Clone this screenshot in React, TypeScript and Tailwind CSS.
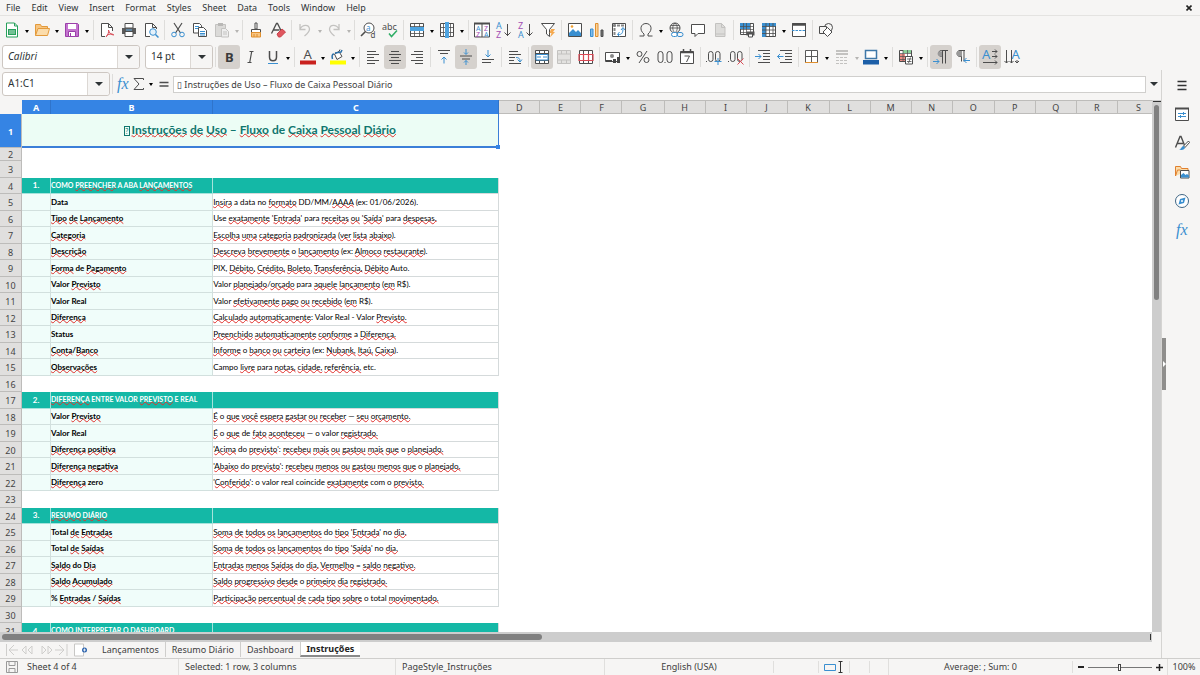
import type { ReactNode } from "react";

// ---------------- DATA ----------------
const MENUS = ["File", "Edit", "View", "Insert", "Format", "Styles", "Sheet", "Data", "Tools", "Window", "Help"];
const EXTRA_COLUMNS = ["D", "E", "F", "G", "H", "I", "J", "K", "L", "M", "N", "O", "P", "Q", "R", "S"];
const TABS = ["Lançamentos", "Resumo Diário", "Dashboard", "Instruções"];

type Row = { kind: "title" | "empty" | "section" | "item"; a?: string; b?: string; c?: string };

// words between ~ are flagged by the spell checker
const ROWS: Row[] = [
    { kind: "title", b: "~Instruções~ ~de~ ~Uso~ – ~Fluxo~ de ~Caixa~ ~Pessoal~ ~Diário~" },
    { kind: "empty" },
    { kind: "empty" },
    { kind: "section", a: "1.", b: "COMO ~PREENCHER~ A ABA ~LANÇAMENTOS~" },
    { kind: "item", b: "Data", c: "~Insira~ a data no ~formato~ DD/MM/~AAAA~ (ex: 01/06/2026)." },
    { kind: "item", b: "~Tipo~ ~de~ ~Lançamento~", c: "Use ~exatamente~ '~Entrada~' para ~receitas~ ~ou~ '~Saída~' para ~despesas.~" },
    { kind: "item", b: "~Categoria~", c: "~Escolha~ ~uma~ ~categoria~ ~padronizada~ (~ver~ ~lista~ ~abaixo~)." },
    { kind: "item", b: "~Descrição~", c: "~Descreva~ ~brevemente~ o ~lançamento~ (ex: ~Almoco~ ~restaurante~)." },
    { kind: "item", b: "~Forma~ de ~Pagamento~", c: "PIX, ~Débito,~ ~Crédito,~ ~Boleto,~ ~Transferência,~ ~Débito~ Auto." },
    { kind: "item", b: "Valor ~Previsto~", c: "Valor ~planejado~/~orçado~ para ~aquele~ ~lançamento~ (~em~ R$)." },
    { kind: "item", b: "Valor Real", c: "Valor ~efetivamente~ ~pago~ ~ou~ ~recebido~ (~em~ R$)." },
    { kind: "item", b: "~Diferença~", c: "~Calculado~ ~automaticamente~: Valor Real - Valor ~Previsto.~" },
    { kind: "item", b: "Status", c: "~Preenchido~ ~automaticamente~ ~conforme~ a ~Diferença.~" },
    { kind: "item", b: "~Conta~/~Banco~", c: "~Informe~ o ~banco~ ~ou~ ~carteira~ (ex: ~Nubank,~ ~Itaú,~ ~Caixa~)." },
    { kind: "item", b: "~Observações~", c: "Campo ~livre~ para ~notas,~ ~cidade,~ ~referência,~ etc." },
    { kind: "empty" },
    { kind: "section", a: "2.", b: "~DIFERENÇA~ ENTRE VALOR ~PREVISTO~ E REAL" },
    { kind: "item", b: "Valor ~Previsto~", c: "~É~ o ~que~ ~você~ ~espera~ ~gastar~ ~ou~ ~receber~ — ~seu~ ~orçamento.~" },
    { kind: "item", b: "Valor Real", c: "~É~ o ~que~ de ~fato~ ~aconteceu~ — o valor ~registrado.~" },
    { kind: "item", b: "~Diferença~ ~positiva~", c: "'~Acima~ do ~previsto~': ~recebeu~ ~mais~ ~ou~ ~gastou~ ~mais~ ~que~ o ~planejado.~" },
    { kind: "item", b: "~Diferença~ ~negativa~", c: "'~Abaixo~ do ~previsto~': ~recebeu~ ~menos~ ~ou~ ~gastou~ ~menos~ ~que~ o ~planejado.~" },
    { kind: "item", b: "~Diferença~ zero", c: "'~Conferido~': o valor real coincide ~exatamente~ com o ~previsto.~" },
    { kind: "empty" },
    { kind: "section", a: "3.", b: "~RESUMO~ ~DIÁRIO~" },
    { kind: "item", b: "Total ~de~ ~Entradas~", c: "~Soma~ ~de~ ~todos~ ~os~ ~lançamentos~ do ~tipo~ '~Entrada~' no ~dia.~" },
    { kind: "item", b: "Total ~de~ ~Saídas~", c: "~Soma~ ~de~ ~todos~ ~os~ ~lançamentos~ do ~tipo~ '~Saída~' no ~dia.~" },
    { kind: "item", b: "~Saldo~ do ~Dia~", c: "~Entradas~ ~menos~ ~Saídas~ do ~dia.~ ~Vermelho~ = ~saldo~ ~negativo.~" },
    { kind: "item", b: "~Saldo~ ~Acumulado~", c: "~Saldo~ ~progressivo~ ~desde~ o ~primeiro~ ~dia~ ~registrado.~" },
    { kind: "item", b: "% ~Entradas~ / ~Saídas~", c: "~Participação~ ~percentual~ ~de~ ~cada~ ~tipo~ ~sobre~ o total ~movimentado.~" },
    { kind: "empty" },
    { kind: "section", a: "4.", b: "COMO ~INTERPRETAR~ O DASHBOARD" },
];

// ---------------- ICONS ----------------
const DARK = "#4d4d4d";
const BLUE = "#3a8fd0";
const GREY = "#c3c2c0";

const alignLines = (x: number[], w: number[], color = DARK) =>
    w.map((width, i) => <path key={i} d={`M${x[i]} ${2.5 + i * 3}h${width}`} stroke={color} />);

const ICONS: Record<string, ReactNode> = {
    new: (
        <>
            <path d="M2.500 1h8l3 3v11h-11z" fill="#fff" stroke="#27a05b" />
            <path d="M10.500 1v3h3" stroke="#27a05b" />
            <path d="M4 7h8v6H4z" fill="#27a05b" />
            <path d="M5 9h6M5 11h6" stroke="#fff" strokeWidth=".7" />
        </>
    ),
    open: (
        <>
            <path d="M1.500 13.500V2.500h5l1 2h6v2" fill="#f7c581" stroke="#e39a3b" />
            <path d="M1.500 13.500l2.500-7h11.500l-2 7z" fill="#fbdcab" stroke="#e39a3b" />
        </>
    ),
    save: (
        <>
            <path d="M1.500 1.500h12l1 1v12h-13z" fill="#c474cf" stroke="#9b3fa9" />
            <path d="M4 2h8v5H4z" fill="#fff" />
            <path d="M4.500 9.500h7v5h-7z" fill="#fff" stroke="#9b3fa9" />
            <path d="M6.500 11v3" stroke="#9b3fa9" />
        </>
    ),
    pdf: (
        <>
            <path d="M6 14.500H2.500v-13h7l4 4V9M9.500 1.500v4h4" fill="#fff" stroke={DARK} />
            <path d="M7 15c2-2 3-5 2.500-7M9.500 8c.5 3 3 5 5.500 5M7.500 13.500c2-1.500 5-2 7-1" stroke="#d84a55" />
        </>
    ),
    print: (
        <>
            <path d="M4 1.500h8V6H4z" fill="#fff" stroke={DARK} />
            <path d="M1 6h14v6H1z" fill="#5a5a5a" />
            <path d="M4 9.500h8v5H4z" fill="#fff" stroke={DARK} />
            <path d="M5 8h6" stroke="#6bb3e8" />
        </>
    ),
    preview: (
        <>
            <path d="M7 14.500H2.500v-13h7l4 4V7M9.500 1.500v4h4" fill="#fff" stroke={DARK} />
            <circle cx="10" cy="10" r="3.300" fill="#e4f1fb" stroke={BLUE} />
            <path d="M12.500 12.500L15.500 15.500" stroke={BLUE} strokeWidth="1.500" />
        </>
    ),
    cut: (
        <>
            <path d="M4 1l6.500 10M12 1L5.500 11" stroke={DARK} strokeWidth="1.200" />
            <circle cx="4" cy="12.500" r="2.300" stroke={BLUE} />
            <circle cx="12" cy="12.500" r="2.300" stroke={BLUE} />
        </>
    ),
    copy: (
        <>
            <path d="M1.500 1.500h6l2 2v7.500h-8z" fill="#fff" stroke={DARK} />
            <path d="M3 4.500h4M3 6.500h3" stroke={BLUE} />
            <path d="M6.500 5.500h5l3 3v6h-8z" fill="#fff" stroke={DARK} />
            <path d="M8 9.500h5M8 11.500h5M8 13h5" stroke={BLUE} />
        </>
    ),
    paste: (
        <>
            <path d="M1.500 2.500h10v12h-10z" fill="#dbdad8" stroke={GREY} />
            <path d="M4 1h5v3H4z" fill="#b9b8b6" />
            <path d="M7.500 6.500h4l3 3v5.500h-7z" fill="#eee" stroke={GREY} />
            <path d="M9 10h4M9 12h4" stroke={GREY} />
        </>
    ),
    clone: (
        <>
            <path d="M7 1h2v6H7zM3.500 7.500h9v3h-9z" fill="#fff" stroke={DARK} />
            <path d="M3.500 10.500h9v4.500h-9z" fill="#f8c583" stroke="#e0902f" />
            <path d="M6 12v3M9 12v3" stroke="#e0902f" />
        </>
    ),
    clear: (
        <>
            <path d="M1.500 11.500L6.500 1.500h1l4 8M3.500 8h6" stroke={DARK} strokeWidth="1.300" />
            <path d="M7 12l5-5 3.500 3-5 5h-2z" fill="#e0575f" stroke="#c9404a" />
        </>
    ),
    undo: <path d="M3 2v5.500h5.500M3 7C6 2 12 2.500 12.500 7c0 3-2.500 5-5 7" stroke={GREY} strokeWidth="1.300" />,
    redo: <path d="M13 2v5.500H7.500M13 7C10 2 4 2.500 3.500 7c0 3 2.500 5 5 7" stroke={GREY} strokeWidth="1.300" />,
    find: (
        <>
            <circle cx="9" cy="6" r="5" fill="#fff" stroke={DARK} />
            <path d="M5.500 9.500L1 14" stroke={DARK} strokeWidth="1.600" />
            <text x="6" y="8.500" fontSize="8" fill={BLUE}>a</text>
            <text x="10.500" y="15.500" fontSize="8" fill={DARK}>d</text>
        </>
    ),
    spell: (
        <>
            <text x="0" y="7.500" fontSize="9" fill={DARK}>abc</text>
            <path d="M7 11.500l2.500 3L15 8.500" stroke="#2fae66" strokeWidth="1.500" />
        </>
    ),
    row: (
        <>
            <path d="M1.500 1.500h13v13h-13z" fill="#fff" stroke={DARK} />
            <path d="M1 4.500h14M1 11.500h14M5.500 1v14M10.500 1v14" stroke={DARK} strokeWidth=".8" />
            <path d="M1 5h14v4H1z" fill="#4da3e0" />
        </>
    ),
    column: (
        <>
            <path d="M1.500 1.500h13v13h-13z" fill="#fff" stroke={DARK} />
            <path d="M1 5.500h14M1 10.500h14M4.500 1v14M11.500 1v14" stroke={DARK} strokeWidth=".8" />
            <path d="M6 0h4v16H6z" fill="#4da3e0" />
        </>
    ),
    sort: (
        <>
            <path d="M.500 1.500h15v13.500H.500zM8 1v14" fill="#fff" stroke={DARK} />
            <path d="M0 1.500h16" stroke={DARK} strokeWidth="2" />
            <g fontSize="7">
                <text x="2" y="8.500" fill={BLUE}>A</text>
                <text x="2" y="14.500" fill="#a34db3">Z</text>
                <text x="10" y="8.500" fill="#a34db3">Z</text>
                <text x="10" y="14.500" fill={BLUE}>A</text>
            </g>
        </>
    ),
    az: (
        <>
            <text x="0" y="7" fontSize="9" fill={BLUE}>A</text>
            <text x="0" y="15.500" fontSize="9" fill="#a34db3">Z</text>
            <path d="M11.500 2v12M8.500 10.500l3 3 3-3" stroke={DARK} />
        </>
    ),
    za: (
        <>
            <text x="0" y="7" fontSize="9" fill="#a34db3">Z</text>
            <text x="0" y="15.500" fontSize="9" fill={BLUE}>A</text>
            <path d="M11.500 2v12M8.500 10.500l3 3 3-3" stroke={DARK} />
        </>
    ),
    filter: (
        <>
            <path d="M1.500 1.500h13l-5 6v7l-3-2.500V7.500z" fill="#fff" stroke={DARK} />
            <path d="M11 7h4l-2 3h2l-5 5.500 1.500-4.500H9.500z" fill="#f5a94f" />
        </>
    ),
    image: (
        <>
            <path d="M1.500 1.500h13v13h-13z" fill="#fff" stroke={DARK} />
            <path d="M2 14v-3l4-4 3 3 2-2 3 3v3z" fill={BLUE} />
            <circle cx="5" cy="4.500" r="1.300" fill="#f0a030" />
        </>
    ),
    chart: (
        <>
            <path d="M1.500 7h2.500v7.500H1.500z" fill="#7fbcec" stroke={BLUE} />
            <path d="M6.500 1.500H9v13H6.500z" fill="#fbd39b" stroke="#e0902f" />
            <path d="M12 8h2v6.500h-2z" fill="#777" stroke={DARK} />
        </>
    ),
    pivot: (
        <>
            <path d="M1.500 1.500h13v13h-13z" fill="#fff" stroke={DARK} />
            <path d="M2 3.500h12M3.500 2v12" stroke="#888" strokeWidth="2" strokeDasharray="3 1" />
            <path d="M7 12.500c4 .500 5-2 5-6M10 8l2-2.500 2 2.500M8.500 10l-2 2.500 2 2" stroke={BLUE} />
        </>
    ),
    omega: <path d="M1.500 14H6v-2C1 8 2.500 1.500 8 1.500s7 6.500 2 10.500v2h4.500" stroke={DARK} />,
    link: (
        <>
            <circle cx="7" cy="6" r="5" stroke={DARK} />
            <path d="M2 6h10M7 1c-3 3-3 7 0 10M7 1c3 3 3 7 0 10M3 3.500h8" stroke={DARK} strokeWidth=".8" />
            <rect x="3.500" y="10.500" width="6" height="4" rx="2" fill="#fff" stroke={BLUE} />
            <rect x="9" y="10.500" width="6" height="4" rx="2" stroke={BLUE} />
        </>
    ),
    comment: <path d="M1.500 2.500h13v9H8l-3 3v-3H1.500z" fill="#fff" stroke={DARK} />,
    headers: (
        <>
            <path d="M3.500 1.500h6l3.500 3.500v9.500H3.500z" fill="#dddcda" stroke={GREY} />
            <path d="M4 12h9M9.500 1.500v4H13" stroke={GREY} />
        </>
    ),
    printArea: (
        <>
            <path d="M1.500 1.500h13v11h-13z" fill="#fff" stroke={DARK} />
            <path d="M1 1h10v6H1z" fill={BLUE} />
            <path d="M1 4.500h13M1 7.500h13M1 10.500h13M4.500 1v12M7.500 1v12M11.500 1v12" stroke={DARK} strokeWidth=".7" />
            <path d="M7.500 9.500h8v4h-8z" fill="#555" />
            <path d="M9.500 12h4v3h-4z" fill="#fff" stroke={DARK} />
        </>
    ),
    freeze: (
        <>
            <path d="M1.500 1.500h13v13h-13z" fill="#fff" stroke={DARK} />
            <path d="M1 1h14v3.500H5V15H1z" fill={BLUE} />
            <path d="M1 4.500h14M1 8h14M1 11.500h14M5 1v14M8.500 1v14M12 1v14" stroke={DARK} strokeWidth=".8" />
        </>
    ),
    split: (
        <>
            <path d="M1.500 1.500h13v13h-13z" fill="#fff" stroke={DARK} />
            <path d="M1 2.500h14" stroke={DARK} strokeWidth="2.500" />
            <path d="M1 8.500h14" stroke={BLUE} strokeDasharray="2.500 1" />
        </>
    ),
    shapes: (
        <>
            <circle cx="10.500" cy="5.500" r="4" stroke={DARK} />
            <path d="M1.500 4.500h7v7h-7z" fill="#f6f5f4" stroke={DARK} />
            <path d="M9.500 5.500l4.500 4.500-4.500 4.500L5 10z" fill="#fff" stroke={DARK} />
        </>
    ),
    bold: <text x="4" y="12.500" fontSize="13" fontWeight="700" fill="#3a3a3a">B</text>,
    italic: <path d="M6.500 2.500h4M4.500 13.500h4M8.700 2.500l-2 11" stroke={DARK} strokeWidth="1.200" />,
    underline: (
        <>
            <path d="M4.500 2v6c0 5 7 5 7 0V2" stroke={DARK} strokeWidth="1.500" />
            <path d="M3 14.500h10" stroke={BLUE} />
        </>
    ),
    fontColor: (
        <>
            <text x="3.500" y="10" fontSize="13" fill={DARK}>A</text>
            <path d="M0 11.500h16v4H0z" fill="#c9211e" />
        </>
    ),
    highlight: (
        <>
            <path d="M4.500 5L9 2.500l3 5-5 3zM9 2.500l1-2" fill="#fff" stroke={DARK} />
            <path d="M4 5C1.500 5 2 8 2.500 10M5 4l6-1 1-2" stroke="#2a6fa8" strokeWidth="1.500" />
            <path d="M0 11.500h16v4H0z" fill="#ffff00" />
        </>
    ),
    left: alignLines([2, 2, 2, 2, 2], [9, 12, 7, 12, 8]),
    center: alignLines([4, 2, 4, 2, 4], [8, 12, 8, 12, 8]),
    right: alignLines([5, 2, 7, 2, 6], [9, 12, 7, 12, 8]),
    top: (
        <>
            <path d="M2 1.500h12M4 4.500h8" stroke={DARK} />
            <path d="M8 14.500V8M5.500 10.500L8 8l2.500 2.500" stroke={BLUE} />
        </>
    ),
    middle: (
        <>
            <path d="M2 7h12M4 10h8" stroke={DARK} />
            <path d="M8 0v5M6 3.500l2 2 2-2M8 16v-4.500M6 13.500l2-2 2 2" stroke={BLUE} />
        </>
    ),
    bottom: (
        <>
            <path d="M2 10.500h12M2 13.500h9" stroke={DARK} />
            <path d="M8 1v6.500M5.500 5.500L8 8l2.500-2.500" stroke={BLUE} />
        </>
    ),
    wrap: (
        <>
            <path d="M2 2.500h9M2 5.500h12M2 8.500h6M2 11.500h5M2 14.500h12" stroke={DARK} />
            <path d="M9 8.500c3 0 4 1 4 4M10.500 10.500l2.500 2.500 2-2.500" stroke={BLUE} />
        </>
    ),
    merge: (
        <>
            <path d="M1.500 1.500h13v13h-13zM1 4.500h14M1 11.500h14M5.500 1v4M10.500 1v4M5.500 12v3M10.500 12v3" fill="#fff" stroke={DARK} />
            <path d="M2 5.500h12v5.500H2z" fill="#fff" stroke={BLUE} />
            <path d="M3 8h4M9 8h4" stroke={BLUE} />
        </>
    ),
    mergeOff: (
        <>
            <path d="M1.500 1.500h13v13h-13z" fill="#e3e2e0" stroke={GREY} />
            <path d="M1 5h14M1 11h14M5.500 1v4M10.500 1v4M5.500 11v4M10.500 11v4" stroke={GREY} />
        </>
    ),
    unmerge: (
        <>
            <path d="M1.500 1.500h13v13h-13zM5.500 1v14M10.500 1v14" fill="#fff" stroke={DARK} />
            <path d="M1 5.500h14v6H1zM5.500 5v7M10.500 5v7" stroke="#d84a55" strokeWidth="1.200" />
        </>
    ),
    currency: (
        <>
            <path d="M.500 3.500h14v9H.500z" fill="#fff" stroke={DARK} />
            <circle cx="7" cy="7" r="2" fill="#888" />
            <path d="M1 11h6v2H1zM8 10h3v4H8zM12 8h3v6h-3z" fill="#444" />
        </>
    ),
    percent: (
        <>
            <circle cx="4.500" cy="5" r="2.500" stroke={DARK} />
            <circle cx="11.500" cy="11" r="2.500" stroke={DARK} />
            <path d="M12 2L4 14" stroke={DARK} />
        </>
    ),
    number: (
        <>
            <rect x="1" y="2.500" width="5" height="11" rx="2.500" stroke={DARK} />
            <rect x="10" y="2.500" width="5" height="11" rx="2.500" stroke={DARK} />
            <path d="M7.500 13.500h1" stroke={DARK} />
        </>
    ),
    date: (
        <>
            <path d="M1.500 2.500h13v12h-13z" fill="#fff" stroke={DARK} />
            <path d="M1 3.500h14M4.500 0v4M11.500 0v4" stroke={DARK} strokeWidth="1.500" />
            <path d="M5.500 7h5l-3 6" stroke={DARK} />
        </>
    ),
    decimalAdd: (
        <>
            <path d="M0 12.500h1" stroke={DARK} />
            <rect x="2.500" y="2.500" width="4.500" height="10" rx="2.200" stroke={DARK} />
            <rect x="9.500" y="2.500" width="4.500" height="10" rx="2.200" stroke={DARK} />
            <path d="M12 9v7M8.500 12.500h7" stroke={BLUE} />
        </>
    ),
    decimalDel: (
        <>
            <path d="M0 12.500h1" stroke={DARK} />
            <rect x="2.500" y="2.500" width="4.500" height="10" rx="2.200" stroke={DARK} />
            <rect x="9.500" y="2.500" width="4.500" height="10" rx="2.200" stroke={DARK} />
            <path d="M9.500 9.500l6 6M15.500 9.500l-6 6" stroke="#d84a55" />
        </>
    ),
    indent: (
        <>
            <path d="M3 1.500h12M8 4.500h7M8 7.500h7M8 10.500h7M3 13.500h12" stroke={DARK} />
            <path d="M0 7.500h6M3.500 5L6 7.500 3.500 10" stroke={BLUE} />
        </>
    ),
    outdent: (
        <>
            <path d="M3 1.500h12M8 4.500h7M8 7.500h7M8 10.500h7M3 13.500h12" stroke={DARK} />
            <path d="M.500 7.500h6M3 5L.500 7.500 3 10" stroke={BLUE} />
        </>
    ),
    borders: (
        <>
            <path d="M1.500 1.500h12v12h-12zM7.500 1v12M1 7.500h12" fill="#fff" stroke="#5a5a5a" />
            <path d="M1 13.500h13" stroke="#e0902f" />
        </>
    ),
    lineStyle: (
        <>
            <path d="M2 2h12M2 5h12" stroke={GREY} strokeWidth="2" />
            <path d="M2 8.500h12M2 11.500h12M2 14.500h12" stroke={GREY} strokeDasharray="3 1" />
        </>
    ),
    borderColor: (
        <>
            <path d="M2.500 1.500h11v8h-11z" fill="#fff" stroke="#3f78a8" strokeWidth="1.500" />
            <path d="M0 11h16v4.500H0z" fill="#1d5fa8" />
        </>
    ),
    conditional: (
        <>
            <path d="M1.500 1.500h12v11h-12z" fill="#fff" stroke={DARK} />
            <path d="M5 1h8v3H5z" fill="#8ad19a" />
            <path d="M2 5h5v7H2z" fill="#ee8d84" />
            <path d="M1 4.500h13M1 7.500h13M1 10.500h13M5 1v12M9.500 1v12" stroke={DARK} strokeWidth=".7" />
            <path d="M7.500 7.500h7v7.500h-7z" fill="#fff" stroke={DARK} />
            <path d="M9 10h4.500M9 12.500h4.500M12.500 8.500l-2 5.500" stroke={DARK} strokeWidth=".8" />
        </>
    ),
    ltr: (
        <>
            <path d="M15 1.500H8.500c-4 0-4 6 0 6H9M9.500 1.500v13M12.500 1.500v13" stroke={DARK} />
            <path d="M6 2.500h3v5H7c-3-1-3-4-1-5z" fill="#999" />
            <path d="M0 12.500h6M3.500 10L6 12.500 3.500 15" stroke={BLUE} />
        </>
    ),
    rtl: (
        <>
            <path d="M10 1.500H5c-4 0-4 6 0 6h1M6.500 1.500v11M9 1.500v11" stroke={DARK} />
            <path d="M4 2h3v5.500H4c-3-1-3-4.500 0-5.500z" fill="#999" />
            <path d="M9 11.500h6M11.500 9L9 11.500 11.500 14" stroke={BLUE} />
        </>
    ),
    horizontalText: (
        <>
            <text x="0" y="10" fontSize="13" fill={BLUE}>A</text>
            <path d="M10 2.500h5M10 7.500h5M1 13.500h14M13 .500l2 2-2 2M13 5.500l2 2-2 2M13 11.500l2 2-2 2" stroke={DARK} />
        </>
    ),
    verticalText: (
        <>
            <text x="7.500" y="10" fontSize="13" fill={BLUE}>A</text>
            <path d="M2.500 1v13M7.500 1v13M13 11v3M.500 12l2 2 2-2M5.500 12l2 2 2-2M11 12l2 2 2-2" stroke={DARK} />
        </>
    ),
    menu: <path d="M3.500 4.500h9M3.500 8.500h9M3.500 12.500h9" stroke="#333" strokeWidth="1.300" />,
    properties: (
        <>
            <path d="M1.500 2.500h13v12h-13z" fill="#fff" stroke={DARK} />
            <path d="M1 2.500h14" stroke={DARK} strokeWidth="2" />
            <path d="M4 7.500h8M4 10.500h8M9.500 6v3M6.500 9v3" stroke={BLUE} />
        </>
    ),
    styles: (
        <>
            <path d="M1.500 12.500L6 1.500h1l4 10M3 8.500h6" stroke={DARK} strokeWidth="1.400" />
            <path d="M14.500 6l-5 5 1.500 1.500 4.500-5z" fill="#fff" stroke={DARK} />
            <path d="M5 14.500c3-.500 2-3 4.500-3.500l1.500 1.500c0 2-3 3-6 2z" fill={BLUE} />
        </>
    ),
    gallery: (
        <>
            <path d="M1.500 12V2.500h5l1 2h6.500v2M1.500 12l2-6h3" fill="#fbdcab" stroke="#e0802f" />
            <path d="M6.500 6.500h8.500v7.500H6.500z" fill="#fff" stroke={DARK} />
            <path d="M7 13.500V11l2.500-2 2 2 1.500-1 2 1.500v2z" fill={BLUE} />
        </>
    ),
    navigator: (
        <>
            <circle cx="8" cy="8" r="6.500" fill="#fff" stroke="#3f6685" />
            <path d="M11.500 4.500L10 10l-5.500 1.500L6 6z" fill={BLUE} />
            <circle cx="8" cy="8" r="1" fill="#fff" />
        </>
    ),
    functions: (
        <text x="2" y="13" fontSize="16" fontStyle="italic" fontFamily="Liberation Serif, serif" fill={BLUE}>
            fx
        </text>
    ),
    sigma: <path d="M12.500 4V2.500H3l5 5.500-5 5.500h9.500V12" stroke={DARK} />,
    equals: <path d="M3.500 6.500h9M3.500 10h9" stroke={DARK} strokeWidth="1.500" />,
};

function Icon({ name }: { name: string }) {
    return (
        <svg
            viewBox="0 0 16 16"
            className="size-4 shrink-0 overflow-visible"
            fill="none"
            fontFamily="Noto Sans, sans-serif"
            aria-hidden="true"
        >
            {ICONS[name]}
        </svg>
    );
}

function Caret({ className = "text-[#2e3436]" }: { className?: string }) {
    return (
        <svg viewBox="0 0 8 4" className={`h-1 w-2 shrink-0 ${className}`} aria-hidden="true">
            <path d="M0 0h8L4 4z" fill="currentColor" />
        </svg>
    );
}

// ---------------- TOOLBARS ----------------
type Tool = { icon: string; label: string; menu?: boolean; off?: boolean; active?: boolean };

const STANDARD: Tool[][] = [
    [
        { icon: "new", label: "New", menu: true },
        { icon: "open", label: "Open", menu: true },
        { icon: "save", label: "Save", menu: true },
    ],
    [{ icon: "pdf", label: "Export as PDF" }, { icon: "print", label: "Print" }, { icon: "preview", label: "Print Preview" }],
    [{ icon: "cut", label: "Cut" }, { icon: "copy", label: "Copy" }, { icon: "paste", label: "Paste", menu: true, off: true }],
    [{ icon: "clone", label: "Clone Formatting" }, { icon: "clear", label: "Clear Formatting" }],
    [{ icon: "undo", label: "Undo", menu: true, off: true }, { icon: "redo", label: "Redo", menu: true, off: true }],
    [{ icon: "find", label: "Find & Replace" }, { icon: "spell", label: "Spelling" }],
    [{ icon: "row", label: "Row", menu: true }, { icon: "column", label: "Column", menu: true }],
    [
        { icon: "sort", label: "Sort" },
        { icon: "az", label: "Sort Ascending" },
        { icon: "za", label: "Sort Descending" },
        { icon: "filter", label: "AutoFilter" },
    ],
    [{ icon: "image", label: "Image" }, { icon: "chart", label: "Chart" }, { icon: "pivot", label: "Pivot Table" }],
    [
        { icon: "omega", label: "Special Character", menu: true },
        { icon: "link", label: "Hyperlink" },
        { icon: "comment", label: "Comment" },
        { icon: "headers", label: "Headers and Footers", off: true },
    ],
    [
        { icon: "printArea", label: "Define Print Area" },
        { icon: "freeze", label: "Freeze", menu: true },
        { icon: "split", label: "Split Window" },
    ],
    [{ icon: "shapes", label: "Show Draw Functions" }],
];

const FORMATTING: Tool[][] = [
    [
        { icon: "bold", label: "Bold", active: true },
        { icon: "italic", label: "Italic" },
        { icon: "underline", label: "Underline", menu: true },
    ],
    [{ icon: "fontColor", label: "Font Color", menu: true }, { icon: "highlight", label: "Background Color", menu: true }],
    [
        { icon: "left", label: "Align Left" },
        { icon: "center", label: "Center Horizontally", active: true },
        { icon: "right", label: "Align Right" },
    ],
    [
        { icon: "top", label: "Align Top" },
        { icon: "middle", label: "Center Vertically", active: true },
        { icon: "bottom", label: "Align Bottom" },
    ],
    [{ icon: "wrap", label: "Wrap Text" }],
    [
        { icon: "merge", label: "Merge and Center", active: true },
        { icon: "mergeOff", label: "Merge Cells", off: true },
        { icon: "unmerge", label: "Unmerge Cells" },
    ],
    [
        { icon: "currency", label: "Currency", menu: true },
        { icon: "percent", label: "Percent" },
        { icon: "number", label: "Number" },
        { icon: "date", label: "Date" },
    ],
    [{ icon: "decimalAdd", label: "Add Decimal" }, { icon: "decimalDel", label: "Delete Decimal" }],
    [{ icon: "indent", label: "Increase Indent" }, { icon: "outdent", label: "Decrease Indent" }],
    [
        { icon: "borders", label: "Borders", menu: true },
        { icon: "lineStyle", label: "Border Style", menu: true, off: true },
        { icon: "borderColor", label: "Border Color", menu: true },
    ],
    [{ icon: "conditional", label: "Conditional Formatting", menu: true }],
    [{ icon: "ltr", label: "Left-To-Right", active: true }, { icon: "rtl", label: "Right-To-Left" }],
    [{ icon: "horizontalText", label: "Text left to right", active: true }, { icon: "verticalText", label: "Text top to bottom" }],
];

function ToolGroup({ tools, last }: { tools: Tool[]; last: boolean }) {
    return (
        <>
            {tools.map((tool) => (
                <div key={tool.icon} className="flex shrink-0 items-center">
                    <button
                        type="button"
                        aria-label={tool.label}
                        className={`flex h-6 w-[22px] items-center justify-center rounded-[3px] ${tool.active ? "bg-[#d5d1cd]" : ""}`}
                    >
                        <Icon name={tool.icon} />
                    </button>
                    {tool.menu && (
                        <button
                            type="button"
                            aria-label={`${tool.label} options`}
                            className={`flex h-6 items-center justify-center pt-0.5 ${tool.off ? "w-[7px] text-[#b5b4b2]" : "w-2 text-black"}`}
                        >
                            <svg viewBox="0 0 4 3" className="h-[3px] w-1" aria-hidden="true">
                                <path d="M0 0h4L2 3z" fill="currentColor" />
                            </svg>
                        </button>
                    )}
                </div>
            ))}
            {!last && <div className="mx-0.5 h-5 w-px shrink-0 bg-[#dedddb]" />}
        </>
    );
}

function Combo({ label, value, width, italic = false }: { label: string; value: string; width: string; italic?: boolean }) {
    return (
        <div className={`relative h-6 shrink-0 ${width}`}>
            <select
                aria-label={label}
                className={`block size-full appearance-none rounded-[3px] border border-[#cdc7c2] bg-white pb-0.5 pl-[5px] text-[10px] leading-4 text-[#2e3436] ${italic ? "italic" : ""}`}
            >
                <option>{value}</option>
            </select>
            <div className="pointer-events-none absolute inset-y-px right-px flex w-[22px] items-center justify-center rounded-r-[3px] border-l border-[#dcd8d4] bg-[#f6f5f4]">
                <Caret />
            </div>
        </div>
    );
}

// ---------------- SHEET ----------------
function CheckedText({ text }: { text: string }) {
    return (
        <>
            {text.split("~").map((part, i) =>
                i % 2 === 1 ? (
                    <span
                        key={i}
                        className="underline decoration-[#e0302c] decoration-wavy decoration-1 -underline-offset-1 [text-decoration-skip-ink:none]"
                    >
                        {part}
                    </span>
                ) : (
                    part
                ),
            )}
        </>
    );
}

function SheetRow({ row, index }: { row: Row; index: number }) {
    const isTitle = row.kind === "title";
    const height = isTitle ? "h-[34px]" : index === 1 ? "h-[13px]" : index % 2 === 1 ? "h-4" : "h-[17px]";
    const section = row.kind === "section";

    return (
        <tr className={height}>
            <th
                scope="row"
                className={`border-r border-b border-[#bdbcba] p-0 pt-px text-center font-['Noto_Sans',sans-serif] text-[9px] leading-none ${isTitle ? "bg-[#3584e4] font-bold text-white" : "bg-[#e0dfde] font-normal text-[#444]"}`}
            >
                {index + 1}
            </th>
            {row.kind === "title" && (
                <td colSpan={3} className="relative border-r border-b-2 border-[#3b7fd8] bg-[#ecfdf5] p-0 text-center text-[12px] leading-none font-bold text-[#0f766e]">
                    <span className="mr-0.5 inline-block border border-current text-[7px] leading-[8px] font-normal">?</span>
                    <CheckedText text={row.b ?? ""} />
                    <span className="absolute -right-0.5 -bottom-[3px] size-1 bg-[#3584e4]" />
                </td>
            )}
            {row.kind === "empty" && <td colSpan={3} className="p-0" />}
            {(section || row.kind === "item") && (
                <>
                    <td className={`border-r border-b p-0 pb-px text-center text-[8px] leading-none font-bold ${section ? "border-[#a5e3db] bg-[#14b8a6] text-white" : "border-[#d2e0de] bg-[#f0fdfa]"}`}>
                        {row.a}
                    </td>
                    <td className={`border-r border-b p-0 pb-px leading-none font-bold whitespace-nowrap ${section ? "border-[#a5e3db] bg-[#14b8a6] text-[7px] text-white" : "border-[#d2e0de] bg-[#f0fdfa] text-[8px] text-black"}`}>
                        <CheckedText text={row.b ?? ""} />
                    </td>
                    <td className={`border-r border-b border-[#d5dadb] p-0 pb-px text-[8px] leading-none whitespace-nowrap ${section ? "bg-[#14b8a6]" : "bg-white text-black"}`}>
                        <CheckedText text={row.c ?? ""} />
                    </td>
                </>
            )}
            <td colSpan={EXTRA_COLUMNS.length} className="p-0" />
        </tr>
    );
}

function Sheet() {
    return (
        <div className="min-h-0 min-w-0 flex-1 overflow-hidden bg-white">
            <table className="w-[1160px] table-fixed border-separate border-spacing-0">
                <colgroup>
                    <col className="w-[22px]" />
                    <col className="w-[29px]" />
                    <col className="w-[162px]" />
                    <col className="w-[286px]" />
                    {EXTRA_COLUMNS.map((name, i) => (
                        <col key={name} className={i % 4 === 3 ? "w-[42px]" : "w-[41px]"} />
                    ))}
                </colgroup>
                <thead>
                    <tr className="h-3.5 text-[9px] leading-none">
                        <td className="bg-[#f6f5f4] p-0" />
                        {["A", "B", "C"].map((name) => (
                            <th key={name} scope="col" className="border-r border-[#2f74cb] bg-[#3584e4] p-0 font-bold text-white">
                                {name}
                            </th>
                        ))}
                        {EXTRA_COLUMNS.map((name) => (
                            <th key={name} scope="col" className="border-y border-r border-[#bdbcba] bg-[#e0dfde] p-0 font-normal text-[#444]">
                                {name}
                            </th>
                        ))}
                    </tr>
                </thead>
                <tbody className="font-[Lato,sans-serif]">
                    {ROWS.map((row, i) => (
                        <SheetRow key={i} row={row} index={i} />
                    ))}
                </tbody>
            </table>
        </div>
    );
}

function SheetTabs() {
    return (
        <div className="flex h-4 shrink-0 items-stretch pb-px text-[9px] text-[#3d3d3d]">
            <div className="flex w-[74px] items-center pl-1.5">
                <svg viewBox="0 0 62 12" className="h-3 w-[62px]" fill="none" stroke="#cfcecc" aria-hidden="true">
                    <path d="M.500 0v12M8 1L3 6l5 5M3 6h9M20 2l-4 4 4 4zM26 2l-4 4 4 4zM36 2l4 4-4 4zM42 2l4 4-4 4zM53 1l5 5-5 5M58 6h-9M61 0v12" />
                </svg>
            </div>
            <button type="button" aria-label="Add Sheet" className="flex w-[21px] items-center">
                <svg viewBox="0 0 14 14" className="size-3.5" fill="none" aria-hidden="true">
                    <path d="M.500 1h9v12h-9z" fill="#fff" stroke="#c8c7c5" />
                    <circle cx="10.500" cy="7" r="2.500" fill="#2a62ad" />
                    <path d="M10.500 5.500v3M9 7h3" stroke="#fff" strokeWidth=".8" />
                </svg>
            </button>
            {TABS.map((tab) => (
                <button
                    key={tab}
                    type="button"
                    className={`border-l px-1.5 leading-none whitespace-nowrap ${tab === "Instruções" ? "border-b-2 border-b-[#8a8a8a] border-l-[#cfcecc] bg-white font-bold text-[#222]" : tab === "Lançamentos" ? "border-transparent" : "border-[#cfcecc]"}`}
                >
                    {tab}
                </button>
            ))}
        </div>
    );
}

function StatusBar() {
    return (
        <footer className="grid h-[17px] shrink-0 grid-cols-[178fr_217fr_209fr_169fr_45fr_31fr_20fr_19fr_184fr_95fr_33fr] items-center border-t border-[#cfcecc] text-[9px] leading-4 whitespace-nowrap text-[#3d3d3d] [&>*+*]:border-l [&>*+*]:border-[#e0dfdd]">
            <div className="flex items-center gap-[9px] pl-1.5">
                <svg viewBox="0 0 12 12" className="size-3" fill="none" stroke="#999" aria-hidden="true">
                    <path d="M.500.500h11v11H.500zM3 .500v4h6v-4M3 11.500v-4h6v4" />
                </svg>
                Sheet 4 of 4
            </div>
            <div className="pl-1.5">Selected: 1 row, 3 columns</div>
            <div className="pl-1.5">PageStyle_Instruções</div>
            <div className="text-center">English (USA)</div>
            <div className="h-3" />
            <div className="flex items-center justify-center">
                <svg viewBox="0 0 20 12" className="h-3 w-5" fill="none" aria-hidden="true">
                    <path d="M.500 3.500h11v6H.500z" stroke={BLUE} />
                    <path d="M14.500.500h4M14.500 11.500h4M16.500 1v10" stroke="#333" />
                </svg>
            </div>
            <div className="h-3" />
            <div className="h-3" />
            <div className="text-center">Average: ; Sum: 0</div>
            <div className="flex items-center justify-center gap-1">
                <button type="button" aria-label="Zoom Out" className="h-0.5 w-1.5 shrink-0 bg-[#222]" />
                <input
                    type="range"
                    aria-label="Zoom"
                    defaultValue={50}
                    className="h-3 w-16 appearance-none bg-transparent [&::-webkit-slider-runnable-track]:h-px [&::-webkit-slider-runnable-track]:bg-[#777] [&::-webkit-slider-thumb]:-mt-[3px] [&::-webkit-slider-thumb]:h-[7px] [&::-webkit-slider-thumb]:w-[3px] [&::-webkit-slider-thumb]:appearance-none [&::-webkit-slider-thumb]:border [&::-webkit-slider-thumb]:border-[#444] [&::-webkit-slider-thumb]:bg-white"
                />
                <button type="button" aria-label="Zoom In" className="shrink-0">
                    <svg viewBox="0 0 7 7" className="size-[7px]" aria-hidden="true">
                        <path d="M3.500 0v7M0 3.500h7" stroke="#222" strokeWidth="1.500" />
                    </svg>
                </button>
            </div>
            <div className="text-center">100%</div>
        </footer>
    );
}

export default function App() {
    return (
        <div className="flex h-screen w-full flex-col overflow-hidden bg-[#f6f5f4] font-['Noto_Sans',sans-serif] text-[#2e3436]">
            {/* Menu */}
            <nav className="flex h-4 shrink-0 items-center gap-[11px] border-b border-[#e4e3e1] px-1.5 text-[9px] leading-4">
                {MENUS.map((menu) => (
                    <button key={menu} type="button">
                        {menu}
                    </button>
                ))}
                <button type="button" aria-label="Close" className="ml-auto flex size-2.5 items-center justify-center">
                    <svg viewBox="0 0 6 6" className="size-1.5" aria-hidden="true">
                        <path d="M.500.500l5 5M5.500.500l-5 5" stroke="#222" strokeWidth="1.600" />
                    </svg>
                </button>
            </nav>

            <div className="flex h-[27px] shrink-0 items-center pt-px pl-px">
                {STANDARD.map((tools, i) => (
                    <ToolGroup key={i} tools={tools} last={i === STANDARD.length - 1} />
                ))}
            </div>

            <div className="flex h-[27px] shrink-0 items-center pt-px pl-0.5">
                <Combo label="Font Name" value="Calibri" width="w-[138px]" italic />
                <div className="w-[5px] shrink-0" />
                <Combo label="Font Size" value="14 pt" width="w-[68px]" />
                <div className="mx-0.5 h-5 w-px shrink-0 bg-[#dedddb]" />
                {FORMATTING.map((tools, i) => (
                    <ToolGroup key={i} tools={tools} last={i === FORMATTING.length - 1} />
                ))}
            </div>

            <div className="flex min-h-0 flex-1">
                <div className="flex min-w-0 flex-1 flex-col">
                    {/* Formula bar */}
                    <div className="flex h-[30px] shrink-0 items-center pb-0.5 pl-0.5">
                        <Combo label="Name Box" value="A1:C1" width="w-[108px]" />
                        <div className="mx-0.5 h-5 w-px shrink-0 bg-[#dedddb]" />
                        <button type="button" aria-label="Function Wizard" className="w-4">
                            <Icon name="functions" />
                        </button>
                        <button type="button" aria-label="Select Function" className="flex items-center gap-0.5 pr-[3px]">
                            <Icon name="sigma" />
                            <svg viewBox="0 0 4 3" className="h-[3px] w-1" aria-hidden="true">
                                <path d="M0 0h4L2 3z" />
                            </svg>
                        </button>
                        <button type="button" aria-label="Formula" className="w-[17px]">
                            <Icon name="equals" />
                        </button>
                        <input
                            aria-label="Input line"
                            defaultValue="▯ Instruções de Uso – Fluxo de Caixa Pessoal Diário"
                            className="h-[17px] min-w-0 flex-1 border border-[#d0cfcd] bg-white px-[3px] text-[9px] text-[#3d3d3d]"
                        />
                        <button type="button" aria-label="Expand Formula Bar" className="flex w-[15px] justify-center">
                            <Caret />
                        </button>
                    </div>

                    <div className="flex min-h-0 flex-1">
                        <Sheet />
                        <div className="flex w-[9px] shrink-0 flex-col items-center bg-[#cdcdcd] pt-px">
                            <div className="h-px w-2 bg-[#333]" />
                            <div className="mt-[3px] h-[195px] w-[5px] rounded-full bg-[#808080]" />
                        </div>
                    </div>
                    <div className="mr-[9px] flex h-2.5 shrink-0 items-center justify-between bg-[#cdcdcd] pr-px pl-0.5">
                        <div className="h-1.5 w-[540px] rounded-full bg-[#808080]" />
                        <div className="h-1.5 w-px bg-[#333]" />
                    </div>
                    <SheetTabs />
                </div>

                {/* Sidebar */}
                <div className="flex w-[5px] shrink-0 items-center border-l border-[#d5d4d2]">
                    <div className="flex h-[52px] w-1 items-center bg-[#8f8e8c]">
                        <svg viewBox="0 0 4 6" className="h-1.5 w-1" aria-hidden="true">
                            <path d="M1 0l3 3-3 3z" fill="#fff" />
                        </svg>
                    </div>
                </div>
                <aside className="flex w-[34px] shrink-0 flex-col items-center gap-[13px] pt-[7px] pr-0.5">
                    {["menu", "properties", "styles", "gallery", "navigator", "functions"].map((name) => (
                        <button key={name} type="button" aria-label={name}>
                            <Icon name={name} />
                        </button>
                    ))}
                </aside>
            </div>

            <StatusBar />
        </div>
    );
}
